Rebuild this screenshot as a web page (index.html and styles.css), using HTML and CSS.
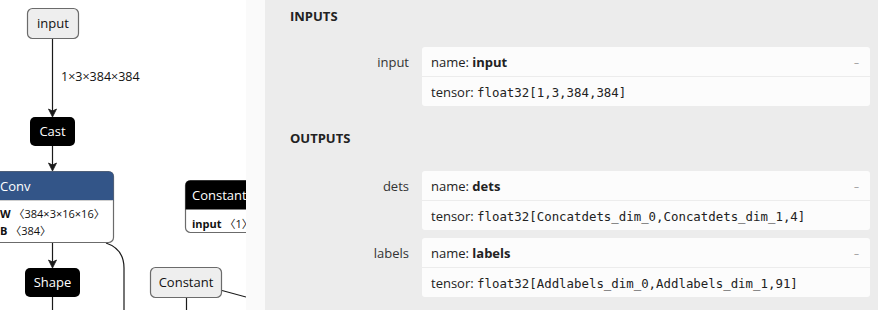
FILE: index.html
```html
<!DOCTYPE html>
<html lang="en">
  <head>
    <meta charset="UTF-8" />
    <title>Model properties</title>
    <meta name="viewport" content="width=device-width, initial-scale=1.0" />
    <link rel="stylesheet" href="styles.css">
  </head>

  <body>
    <div class="graph">
      <svg width="246" height="310" viewBox="0 0 246 310">
        <!-- edges -->
        <g class="edge">
          <line x1="52.5" y1="38" x2="52.5" y2="115" />
          <line x1="52.5" y1="146" x2="52.5" y2="169" />
          <line x1="52.5" y1="242" x2="52.5" y2="266" />
          <line x1="52.5" y1="297" x2="52.5" y2="310" />
          <path d="M106 243 C 118 247, 124 255, 124 268 L 124 310" />
          <line x1="186.5" y1="297" x2="186.5" y2="310" />
          <line x1="222" y1="290.5" x2="246" y2="297" />
        </g>
        <g class="arrow">
          <path d="M48.5 109 L52.5 117 L56.5 109 L52.5 111 Z" />
          <path d="M48.5 163 L52.5 171 L56.5 163 L52.5 165 Z" />
          <path d="M48.5 260 L52.5 268 L56.5 260 L52.5 262 Z" />
        </g>
        <text class="edge-label" x="61" y="81">1×3×384×384</text>

        <!-- input -->
        <rect class="node-light" x="27.5" y="8.5" width="51" height="30" rx="5" />
        <text class="node-text" x="53" y="28" text-anchor="middle">input</text>

        <!-- Cast -->
        <rect class="node-dark" x="30" y="117" width="45" height="29" rx="5" />
        <text class="node-text white" x="52.5" y="136" text-anchor="middle">Cast</text>

        <!-- Conv -->
        <rect class="node-body" x="-10.5" y="171.5" width="124" height="71" rx="5" />
        <path class="node-head-blue" d="M-10.5 200.5 L-10.5 176.5 Q-10.5 171.5 -5.5 171.5 L108.5 171.5 Q113.5 171.5 113.5 176.5 L113.5 200.5 Z" />
        <line class="node-sep" x1="-10" y1="200.5" x2="113" y2="200.5" />
        <text class="node-text white" x="0" y="191">Conv</text>
        <text class="attr" x="0" y="218"><tspan class="attr-name">W</tspan> 〈384×3×16×16〉</text>
        <text class="attr" x="0" y="235"><tspan class="attr-name">B</tspan> 〈384〉</text>

        <!-- Shape -->
        <rect class="node-dark" x="25" y="268" width="55" height="29" rx="5" />
        <text class="node-text white" x="52.5" y="287" text-anchor="middle">Shape</text>

        <!-- Constant (with input) -->
        <rect class="node-body" x="185.5" y="180.5" width="90" height="52" rx="5" />
        <path class="node-head-dark" d="M185.5 209.5 L185.5 185.5 Q185.5 180.5 190.5 180.5 L270.5 180.5 Q275.5 180.5 275.5 185.5 L275.5 209.5 Z" />
        <text class="node-text white" x="192" y="200">Constant</text>
        <text class="attr" x="192" y="228"><tspan class="attr-name">input</tspan> 〈1〉</text>

        <!-- Constant -->
        <rect class="node-light" x="150.5" y="267.5" width="71" height="30" rx="5" />
        <text class="node-text" x="186" y="287" text-anchor="middle">Constant</text>
      </svg>
    </div>

    <div class="sidebar">
      <div class="sidebar-edge"></div>
      <div class="sidebar-body">
        <div class="section-title first">Inputs</div>
        <div class="section-list">
          <div class="item">
            <div class="item-name">input</div>
            <div class="item-card">
              <div class="item-row">
                <span>name: <b>input</b></span>
                <span class="toggle">–</span>
              </div>
              <div class="item-row">
                <span>tensor: <code>float32[1,3,384,384]</code></span>
              </div>
            </div>
          </div>
        </div>

        <div class="section-title second">Outputs</div>
        <div class="section-list outputs">
          <div class="item">
            <div class="item-name">dets</div>
            <div class="item-card">
              <div class="item-row">
                <span>name: <b>dets</b></span>
                <span class="toggle">–</span>
              </div>
              <div class="item-row">
                <span>tensor: <code>float32[Concatdets_dim_0,Concatdets_dim_1,4]</code></span>
              </div>
            </div>
          </div>
          <div class="item">
            <div class="item-name">labels</div>
            <div class="item-card">
              <div class="item-row">
                <span>name: <b>labels</b></span>
                <span class="toggle">–</span>
              </div>
              <div class="item-row">
                <span>tensor: <code>float32[Addlabels_dim_0,Addlabels_dim_1,91]</code></span>
              </div>
            </div>
          </div>
        </div>
      </div>
    </div>
  </body>
</html>
```

FILE: styles.css
```css
:root {
  --sidebar-bg: #ececec;
  --card-bg: #fcfcfc;
  --text: #242424;
  --muted: #9a9a9a;
  --node-border: #6b6b6b;
  --conv: #335588;
}

* {
  margin: 0;
  padding: 0;
  box-sizing: border-box;
}

body {
  width: 878px;
  height: 310px;
  overflow: hidden;
  display: flex;
  background: #ffffff;
  font-family: 'Open Sans', 'Noto Sans', sans-serif;
  color: var(--text);
}

/* graph */
.graph {
  width: 246px;
  height: 310px;
  flex: none;
  overflow: hidden;
}

.graph svg {
  display: block;
}

.edge line,
.edge path {
  stroke: #1a1a1a;
  stroke-width: 1.2;
  fill: none;
}

.arrow path {
  fill: #1a1a1a;
  stroke: #1a1a1a;
  stroke-width: 0.8;
  stroke-linejoin: round;
}

.edge-label {
  font-size: 12.5px;
  fill: #111;
  font-family: 'Open Sans', sans-serif;
}

.node-light {
  fill: #eeeeee;
  stroke: var(--node-border);
  stroke-width: 1.2;
}

.node-dark {
  fill: #000000;
}

.node-body {
  fill: #ffffff;
  stroke: var(--node-border);
  stroke-width: 1.2;
}

.node-head-blue {
  fill: var(--conv);
}

.node-head-dark {
  fill: #000000;
}

.node-sep {
  stroke: #cfcfcf;
  stroke-width: 1;
}

.node-text {
  font-size: 13px;
  fill: #111;
  font-family: 'Open Sans', sans-serif;
}

.node-text.white {
  fill: #ffffff;
}

.attr {
  font-size: 11px;
  fill: #111;
  font-family: 'Open Sans', 'Noto Sans CJK SC', sans-serif;
}

.attr-name {
  font-weight: 700;
}

/* sidebar */
.sidebar {
  flex: 1;
  display: flex;
  height: 310px;
}

.sidebar-edge {
  width: 19px;
  background: #fafafa;
  flex: none;
}

.sidebar-body {
  flex: 1;
  background: var(--sidebar-bg);
  padding: 0 8px 0 25px;
}

.section-title {
  font-size: 13px;
  font-weight: 700;
  text-transform: uppercase;
  line-height: 20px;
  height: 20px;
  color: #222;
}

.section-title.first {
  margin-top: 6px;
}

.section-title.second {
  margin-top: 22px;
}

.section-list {
  margin-top: 21px;
  display: flex;
  flex-direction: column;
  gap: 8px;
}

.section-list.outputs {
  margin-top: 23px;
}

.item {
  display: flex;
  gap: 13px;
}

.item-name {
  width: 119px;
  flex: none;
  text-align: right;
  font-size: 13px;
  color: #333;
  line-height: 18px;
  padding-top: 6px;
}

.item-card {
  flex: 1;
  background: var(--card-bg);
  border-radius: 3px;
}

.item-row {
  height: 29px;
  padding: 0 9px;
  display: flex;
  align-items: center;
  justify-content: space-between;
  font-size: 13px;
  color: #222;
}

.item-row + .item-row {
  height: 30px;
  border-top: 1px solid #ececec;
}

.item-row b {
  font-weight: 700;
}

code {
  font-family: 'DejaVu Sans Mono', 'Liberation Mono', monospace;
  font-size: 12.4px;
  color: #222;
}

.toggle {
  color: var(--muted);
  font-size: 10px;
  padding-right: 2px;
}
```
